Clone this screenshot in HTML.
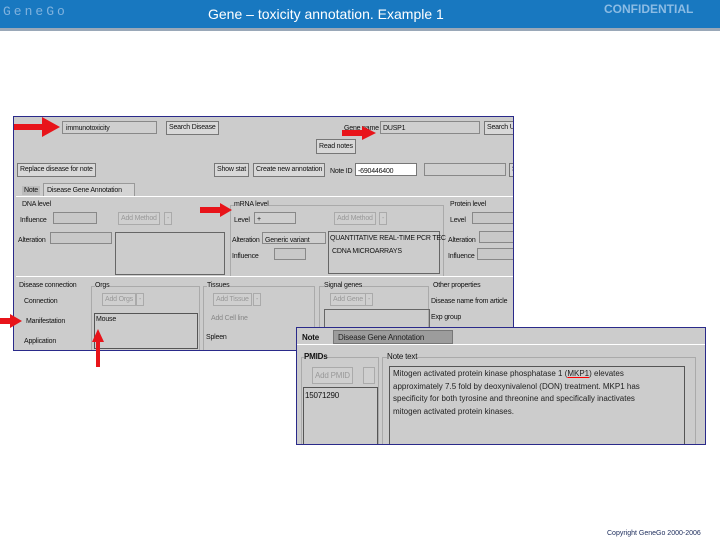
<!DOCTYPE html>
<html><head><meta charset="utf-8"><style>
*{margin:0;padding:0;box-sizing:border-box}
body{width:720px;height:540px;background:#fff;position:relative;overflow:hidden;font-family:"Liberation Sans",sans-serif}
.a{position:absolute}
.t{position:absolute;font-size:7px;color:#111;white-space:nowrap;line-height:9px;letter-spacing:-0.2px}
.b{position:absolute;border:1px solid #777;background:#d8d8d8;font-size:7px;line-height:12px;padding:0 2px;white-space:nowrap;color:#111;letter-spacing:-0.2px}
.bd{position:absolute;border:1px solid #aaa;background:#cfcfcf;font-size:7px;line-height:11px;padding:0 2px;color:#999;white-space:nowrap;letter-spacing:-0.2px}
.f{position:absolute;border:1px solid #888;background:#c8c8c8}
.w{position:absolute;border:1px solid #777;background:#fff}
.gr{position:absolute;border:1px solid #aaa}
</style></head><body>
<div class="a" style="left:0;top:0;width:720px;height:28px;background:#1878c0"></div>
<div class="a" style="left:0;top:28px;width:720px;height:3px;background:#9aa8b8"></div>
<div class="t" style="left:3px;top:5px;font-size:13px;line-height:14px;color:#7fb2de;letter-spacing:3px;font-family:'Liberation Mono',monospace">GeneGo</div>
<div class="t" style="left:208px;top:6px;font-size:14px;line-height:16px;color:#fff;letter-spacing:0">Gene – toxicity annotation. Example 1</div>
<div class="t" style="left:604px;top:2px;font-size:12px;line-height:14px;color:#8cbce4;font-weight:bold;letter-spacing:0">CONFIDENTIAL</div>

<!-- panel 1 -->
<div class="a" style="left:13px;top:116px;width:501px;height:235px;background:#cccccc;border:1px solid #2a2a8a;overflow:hidden">
 <div class="f" style="left:48px;top:4px;width:95px;height:13px;background:#cfcfcf"></div>
 <div class="t" style="left:52px;top:7px">immunotoxicity</div>
 <div class="b" style="left:152px;top:4px">Search Disease</div>
 <div class="t" style="left:330px;top:7px">Gene name</div>
 <div class="f" style="left:366px;top:4px;width:100px;height:13px;background:#cfcfcf"></div>
 <div class="t" style="left:369px;top:7px">DUSP1</div>
 <div class="b" style="left:470px;top:4px">Search U</div>
 <div class="b" style="left:302px;top:22px;height:15px;line-height:13px">Read notes</div>
 <div class="b" style="left:3px;top:46px;height:14px">Replace disease for note</div>
 <div class="b" style="left:200px;top:46px;height:14px">Show stat</div>
 <div class="b" style="left:239px;top:46px;height:14px">Create new annotation</div>
 <div class="t" style="left:316px;top:50px">Note ID</div>
 <div class="w" style="left:341px;top:46px;width:62px;height:13px"></div>
 <div class="t" style="left:344px;top:50px">-690446400</div>
 <div class="f" style="left:410px;top:46px;width:82px;height:13px;background:#cfcfcf"></div>
 <div class="b" style="left:495px;top:46px;height:14px">S</div>
 <div class="t" style="left:8px;top:69px;background:#bbb;padding:0 2px">Note</div>
 <div class="a" style="left:29px;top:66px;width:92px;height:13px;border:1px solid #999;border-bottom:none;background:#d4d4d4"></div>
 <div class="t" style="left:33px;top:69px">Disease Gene Annotation</div>
 <div class="a" style="left:2px;top:79px;width:499px;height:1px;background:#fff"></div>
 <div class="t" style="left:8px;top:83px">DNA level</div>
 <div class="t" style="left:6px;top:99px">Influence</div>
 <div class="f" style="left:39px;top:95px;width:44px;height:12px"></div>
 <div class="bd" style="left:104px;top:95px">Add Method</div>
 <div class="bd" style="left:150px;top:95px">-</div>
 <div class="t" style="left:4px;top:119px">Alteration</div>
 <div class="f" style="left:36px;top:115px;width:62px;height:12px"></div>
 <div class="w" style="left:101px;top:115px;width:110px;height:43px;background:#ccc;border-color:#666"></div>
 <div class="gr" style="left:216px;top:88px;width:214px;height:72px"></div>
 <div class="t" style="left:220px;top:83px;background:#ccc">mRNA level</div>
 <div class="t" style="left:220px;top:99px">Level</div>
 <div class="f" style="left:240px;top:95px;width:42px;height:12px;background:#cfcfcf"></div>
 <div class="t" style="left:243px;top:98px">+</div>
 <div class="bd" style="left:320px;top:95px">Add Method</div>
 <div class="bd" style="left:365px;top:95px">-</div>
 <div class="t" style="left:218px;top:119px">Alteration</div>
 <div class="f" style="left:248px;top:115px;width:64px;height:12px;background:#cfcfcf"></div>
 <div class="t" style="left:251px;top:119px">Generic variant</div>
 <div class="t" style="left:218px;top:135px">Influence</div>
 <div class="f" style="left:260px;top:131px;width:32px;height:12px"></div>
 <div class="a" style="left:314px;top:114px;width:112px;height:43px;border:1px solid #666"></div>
 <div class="t" style="left:316px;top:117px">QUANTITATIVE REAL-TIME PCR TEC</div>
 <div class="t" style="left:318px;top:130px">CDNA MICROARRAYS</div>
 <div class="t" style="left:436px;top:83px">Protein level</div>
 <div class="t" style="left:436px;top:99px">Level</div>
 <div class="f" style="left:458px;top:95px;width:42px;height:12px"></div>
 <div class="t" style="left:434px;top:119px">Alteration</div>
 <div class="f" style="left:465px;top:114px;width:36px;height:12px"></div>
 <div class="t" style="left:434px;top:135px">Influence</div>
 <div class="f" style="left:463px;top:131px;width:38px;height:12px"></div>
 <div class="a" style="left:2px;top:159px;width:499px;height:1px;background:#fff"></div>
 <div class="t" style="left:5px;top:164px">Disease connection</div>
 <div class="t" style="left:10px;top:180px">Connection</div>
 <div class="t" style="left:12px;top:200px">Manifestation</div>
 <div class="t" style="left:10px;top:220px">Application</div>
 <div class="gr" style="left:77px;top:169px;width:109px;height:70px"></div>
 <div class="t" style="left:81px;top:164px;background:#ccc">Orgs</div>
 <div class="bd" style="left:88px;top:176px">Add Orgs</div>
 <div class="bd" style="left:122px;top:176px">-</div>
 <div class="a" style="left:80px;top:196px;width:104px;height:36px;border:1px solid #555"></div>
 <div class="t" style="left:82px;top:198px">Mouse</div>
 <div class="gr" style="left:189px;top:169px;width:112px;height:70px"></div>
 <div class="t" style="left:193px;top:164px;background:#ccc">Tissues</div>
 <div class="bd" style="left:199px;top:176px">Add Tissue</div>
 <div class="bd" style="left:239px;top:176px">-</div>
 <div class="t" style="left:197px;top:197px;color:#888">Add Cell line</div>
 <div class="t" style="left:192px;top:216px">Spleen</div>
 <div class="gr" style="left:305px;top:169px;width:110px;height:70px"></div>
 <div class="t" style="left:310px;top:164px;background:#ccc">Signal genes</div>
 <div class="bd" style="left:316px;top:176px">Add Gene</div>
 <div class="bd" style="left:351px;top:176px">-</div>
 <div class="a" style="left:310px;top:192px;width:106px;height:30px;border:1px solid #666"></div>
 <div class="t" style="left:419px;top:164px">Other properties</div>
 <div class="t" style="left:417px;top:180px">Disease name from article</div>
 <div class="t" style="left:417px;top:196px">Exp group</div>
</div>

<!-- panel 2 -->
<div class="a" style="left:296px;top:327px;width:410px;height:118px;background:#cccccc;border:1px solid #2a2a8a;overflow:hidden">
 <div class="a" style="left:0;top:0;width:410px;height:16px;background:#ccc"></div>
 <div class="t" style="left:5px;top:5px;font-weight:bold;font-size:8px">Note</div>
 <div class="a" style="left:36px;top:2px;width:120px;height:14px;background:#9c9c9c;border:1px solid #777"></div>
 <div class="t" style="left:41px;top:5px;font-size:8px;color:#222">Disease Gene Annotation</div>
 <div class="a" style="left:0;top:16px;width:410px;height:1px;background:#fff"></div>
 <div class="gr" style="left:4px;top:29px;width:78px;height:92px"></div>
 <div class="t" style="left:7px;top:24px;font-weight:bold;font-size:8px;background:#ccc">PMIDs</div>
 <div class="bd" style="left:15px;top:39px;height:17px;line-height:15px;font-size:8px">Add PMID</div>
 <div class="bd" style="left:66px;top:39px;width:12px;height:17px"></div>
 <div class="a" style="left:6px;top:59px;width:75px;height:62px;border:1px solid #555"></div>
 <div class="t" style="left:8px;top:63px;font-size:8px">15071290</div>
 <div class="gr" style="left:85px;top:29px;width:314px;height:92px"></div>
 <div class="t" style="left:90px;top:24px;font-size:8px;background:#ccc">Note text</div>
 <div class="a" style="left:92px;top:38px;width:296px;height:85px;border:1px solid #555"></div>
 <div class="t" style="left:96px;top:40px;font-size:8px;line-height:12.5px;color:#222;letter-spacing:0">Mitogen activated protein kinase phosphatase 1 (<span style="text-decoration:underline;text-decoration-color:red">MKP1</span>) elevates<br>approximately 7.5 fold by deoxynivalenol (DON) treatment. MKP1 has<br>specificity for both tyrosine and threonine and specifically inactivates<br>mitogen activated protein kinases.</div>
</div>

<svg class="a" style="left:0;top:0" width="720" height="540">
 <g fill="#e8141a">
  <polygon points="14,124 42,124 42,117 60,127 42,137 42,130 14,130"/>
  <polygon points="342,130 362,130 362,126 376,133 362,140 362,136 342,136"/>
  <polygon points="200,207 220,207 220,203 232,210 220,217 220,213 200,213"/>
  <polygon points="0,318 10,318 10,314 22,321 10,328 10,324 0,324"/>
  <polygon points="96,367 96,342 92,342 98,329 104,342 100,342 100,367"/>
 </g>
 <text x="607" y="535" font-size="7" fill="#1a2a5a" font-family="Liberation Sans, sans-serif">Copyright GeneGo 2000-2006</text>
</svg>
</body></html>
